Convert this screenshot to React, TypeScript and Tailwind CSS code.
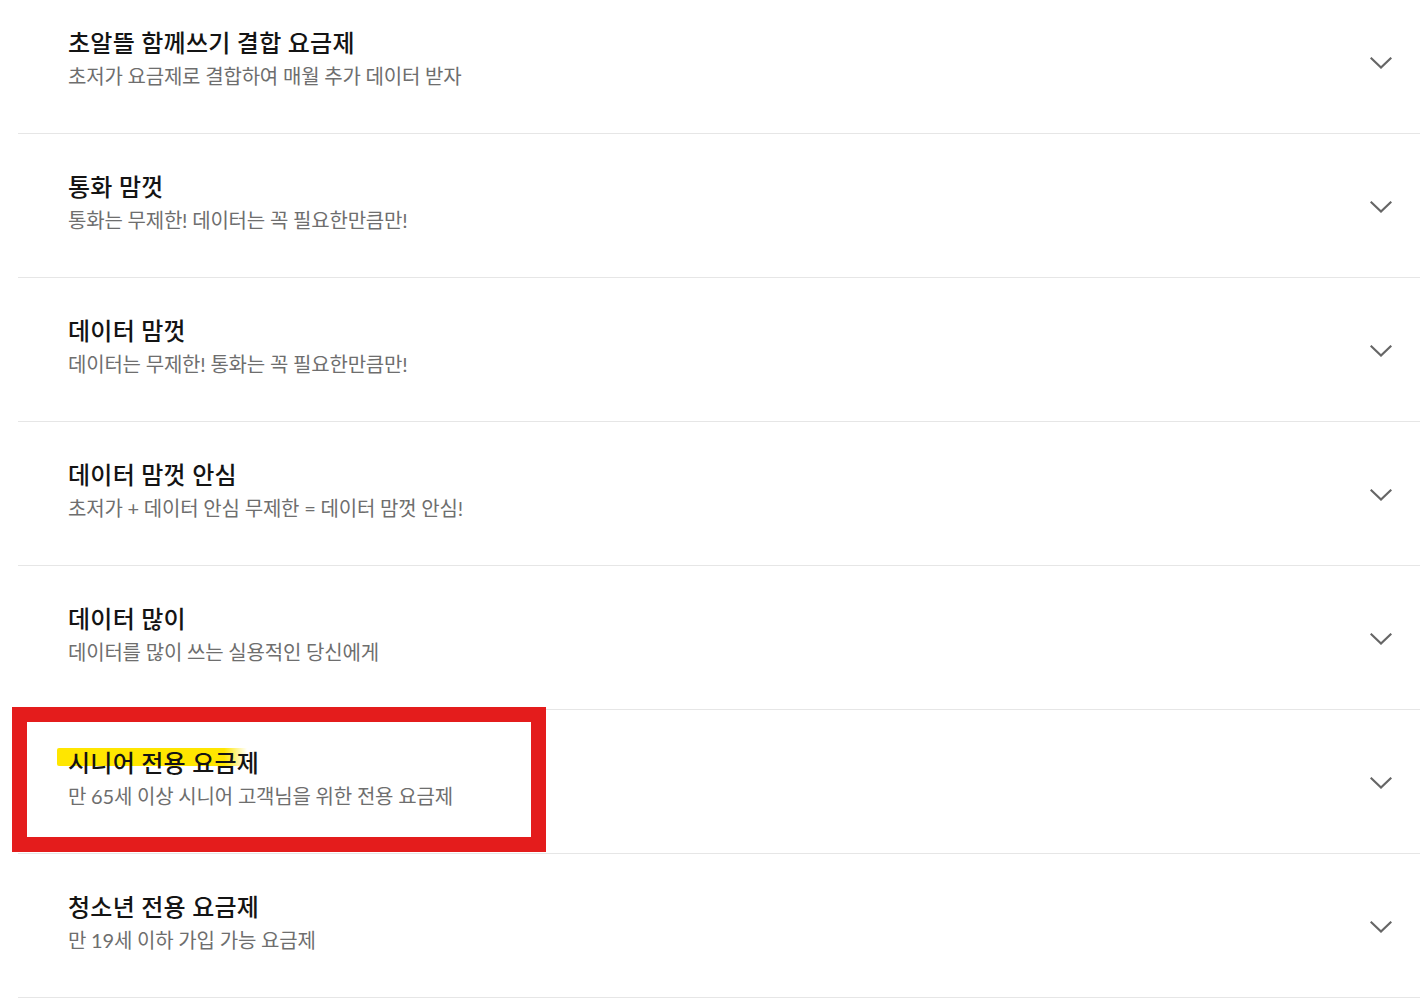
const plans = [
  { title: "초알뜰 함께쓰기 결합 요금제", desc: "초저가 요금제로 결합하여 매월 추가 데이터 받자" },
  { title: "통화 맘껏", desc: "통화는 무제한! 데이터는 꼭 필요한만큼만!" },
  { title: "데이터 맘껏", desc: "데이터는 무제한! 통화는 꼭 필요한만큼만!" },
  { title: "데이터 맘껏 안심", desc: "초저가 + 데이터 안심 무제한 = 데이터 맘껏 안심!" },
  { title: "데이터 많이", desc: "데이터를 많이 쓰는 실용적인 당신에게" },
  { title: "시니어 전용 요금제", desc: "만 65세 이상 시니어 고객님을 위한 전용 요금제", marked: true },
  { title: "청소년 전용 요금제", desc: "만 19세 이하 가입 가능 요금제" },
];

function Chevron() {
  return (
    <svg width="22" height="12" viewBox="0 0 22 12" fill="none" className="mt-[3px] shrink-0">
      <polyline points="1.5,1.5 11,10.5 20.5,1.5" stroke="#666666" strokeWidth="2.2" strokeLinecap="square" />
    </svg>
  );
}

export default function App() {
  return (
    <div
      className="min-h-[1000px] bg-white overflow-hidden"
      style={{ fontFamily: 'Lato, "Noto Sans CJK KR", sans-serif' }}
    >
      <ul className="-mt-[10px] ml-[18px]">
        {plans.map((p) => (
          <li
            key={p.title}
            className="relative flex h-[144px] items-center justify-between border-b border-[#e6e6e6] pl-[50px] pr-[28px]"
          >
            {p.marked && (
              <>
                <span className="absolute left-[39px] top-[38px] h-[18px] w-[190px] rounded-l-[2px] bg-[linear-gradient(90deg,#ffe600_0%,#ffe600_88%,rgba(255,230,0,0)_100%)]" />
                <span className="absolute -left-[6px] -top-[3px] h-[145px] w-[534px] border-[15px] border-[#e41c1c]" />
              </>
            )}
            <div className="relative flex flex-col pb-[6px]">
              <h3 className="text-[24px] leading-[32px] font-medium tracking-[0.01em] text-[#141414]">
                {p.title}
              </h3>
              <p className="mt-[3px] text-[20px] leading-[28px] tracking-[-0.01em] text-[#6e6e6e]">
                {p.desc}
              </p>
            </div>
            <Chevron />
          </li>
        ))}
      </ul>
    </div>
  );
}
